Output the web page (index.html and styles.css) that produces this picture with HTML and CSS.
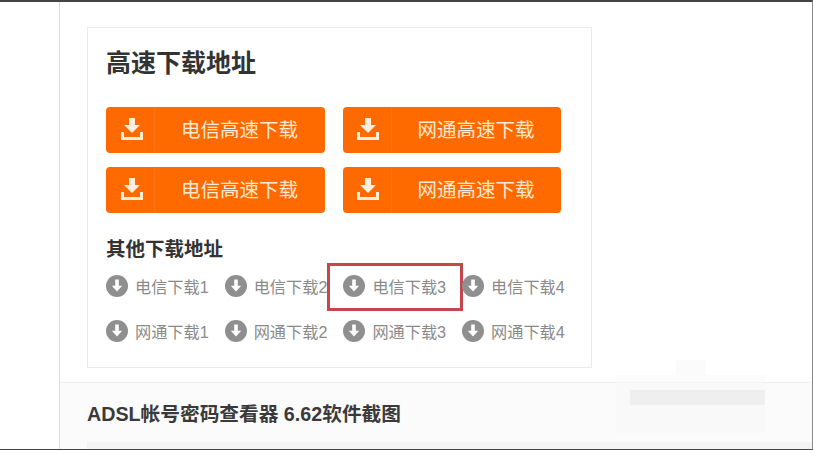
FILE: index.html
```html
<!DOCTYPE html>
<html>
	<head>
		<meta charset="utf-8">
		<title>ADSL帐号密码查看器</title>
		<link rel="stylesheet" href="styles.css">
	</head>
	<body>
		<svg class="iconDefs" width="0" height="0">
			<symbol id="tray" viewBox="0 0 24 24">
				<path d="M9 1h6v7h5l-8 8-8-8h5z" fill="#ffeedd"/>
				<path d="M1 15v8h22v-8h-3v5H4v-5z" fill="#ffeedd"/>
			</symbol>
			<symbol id="circle" viewBox="0 0 22 22">
				<circle cx="11" cy="11" r="11" fill="#8f8f8f"/>
				<path d="M9.2 4.5h3.6v6.3h3.4L11 16.6 5.8 10.8h3.4z" fill="#fff"/>
			</symbol>
		</svg>

		<div class="page">
			<div class="mainColumn">
				<div class="topArea">
					<div class="downloadCard">
						<h2 class="cardTitle">高速下载地址</h2>
						<div class="fastGrid">
							<a class="fastButton"><span class="fastIcon"><svg width="24" height="24"><use href="#tray"/></svg></span><span class="fastText">电信高速下载</span></a>
							<a class="fastButton"><span class="fastIcon"><svg width="24" height="24"><use href="#tray"/></svg></span><span class="fastText">网通高速下载</span></a>
							<a class="fastButton"><span class="fastIcon"><svg width="24" height="24"><use href="#tray"/></svg></span><span class="fastText">电信高速下载</span></a>
							<a class="fastButton"><span class="fastIcon"><svg width="24" height="24"><use href="#tray"/></svg></span><span class="fastText">网通高速下载</span></a>
						</div>
						<h3 class="otherTitle">其他下载地址</h3>
						<div class="otherGrid">
							<a class="otherLink"><svg width="22" height="22"><use href="#circle"/></svg>电信下载1</a>
							<a class="otherLink"><svg width="22" height="22"><use href="#circle"/></svg>电信下载2</a>
							<a class="otherLink"><svg width="22" height="22"><use href="#circle"/></svg>电信下载3<span class="redBox"></span></a>
							<a class="otherLink"><svg width="22" height="22"><use href="#circle"/></svg>电信下载4</a>
							<a class="otherLink"><svg width="22" height="22"><use href="#circle"/></svg>网通下载1</a>
							<a class="otherLink"><svg width="22" height="22"><use href="#circle"/></svg>网通下载2</a>
							<a class="otherLink"><svg width="22" height="22"><use href="#circle"/></svg>网通下载3</a>
							<a class="otherLink"><svg width="22" height="22"><use href="#circle"/></svg>网通下载4</a>
						</div>
					</div>
				</div>
				<div class="shotSection">
					<h2 class="shotTitle">ADSL帐号密码查看器 6.62软件截图</h2>
					<div class="shotBar"></div>
				</div>
			</div>
		</div>
		<div class="watermark"><div class="watermarkTop"></div><div class="watermarkBody"><div class="watermarkBand"></div></div></div>
	</body>
</HTML>
```

FILE: styles.css
```css
html, body {
	margin: 0;
	padding: 0;
	height: 100%;
	overflow: hidden;
	background-color: #fff;
	font-family: "Liberation Sans", "Noto Sans CJK SC", sans-serif;
}

.iconDefs {
	position: absolute;
}

.page {
	box-sizing: border-box;
	height: 450px;
	padding-left: 59px;
	border-top: 2px solid #444;
	border-bottom: 1px solid #444;
	border-right: 1px solid #888;
}

.mainColumn {
	display: flex;
	flex-direction: column;
	height: 100%;
	border-left: 1px solid #dcdcdc;
}

.topArea {
	height: 381px;
	box-sizing: border-box;
	padding: 25px 0 0 27px;
	border-bottom: 1px solid #f0f0f0;
}

.downloadCard {
	box-sizing: border-box;
	width: 505px;
	height: 341px;
	padding: 0 18px;
	border: 1px solid #ebebeb;
}

.cardTitle {
	margin: 0;
	padding-top: 19px;
	font-size: 25px;
	line-height: 32px;
	font-weight: bold;
	color: #333;
}

.fastGrid {
	display: grid;
	grid-template-columns: 218.5px 218.5px;
	grid-auto-rows: 46px;
	column-gap: 18px;
	row-gap: 14px;
	margin-top: 28px;
}

.fastButton {
	display: flex;
	align-items: center;
	background-color: #ff6a00;
	border-radius: 4px;
	color: #ffe9d2;
}

.fastIcon {
	display: flex;
	align-items: center;
	justify-content: center;
	width: 49px;
	height: 100%;
	padding: 0 0 2px 3px;
	box-sizing: border-box;
	border-right: 1px solid #f8731a;
}

.fastText {
	margin-left: 26px;
	padding-bottom: 4px;
	font-size: 19.5px;
	white-space: nowrap;
}

.otherTitle {
	margin: 23px 0 0 0;
	font-size: 19.5px;
	line-height: 26px;
	font-weight: bold;
	color: #333;
}

.otherGrid {
	display: grid;
	grid-template-columns: repeat(4, 118.7px);
	grid-auto-rows: 45px;
	margin-top: 1px;
}

.otherLink {
	position: relative;
	display: flex;
	align-items: center;
	gap: 7px;
	font-size: 16.2px;
	color: #8a8a8a;
	white-space: nowrap;
}

.redBox {
	position: absolute;
	left: -16px;
	top: 0;
	width: 130px;
	height: 42px;
	border: 3px solid #c6464b;
}

.shotSection {
	flex: 1;
	background-color: #fbfbfc;
	padding-left: 27px;
	overflow: hidden;
}

.shotTitle {
	margin: 0;
	padding-top: 18px;
	font-size: 19.7px;
	line-height: 26px;
	font-weight: bold;
	color: #3a3a3a;
}

.shotBar {
	height: 20px;
	margin-top: 15px;
	background-color: #f4f4f4;
}

.watermark {
	position: absolute;
	left: 616px;
	top: 360px;
	width: 149px;
	opacity: 0.55;
}

.watermarkTop {
	width: 30px;
	height: 15px;
	margin-left: 60px;
	background-color: #f8f8f8;
}

.watermarkBody {
	height: 58px;
	padding-top: 15px;
	box-sizing: border-box;
	background-color: #f8f8f8;
}

.watermarkBand {
	height: 15px;
	margin-left: 14px;
	background-color: #e6e6e6;
}
```
